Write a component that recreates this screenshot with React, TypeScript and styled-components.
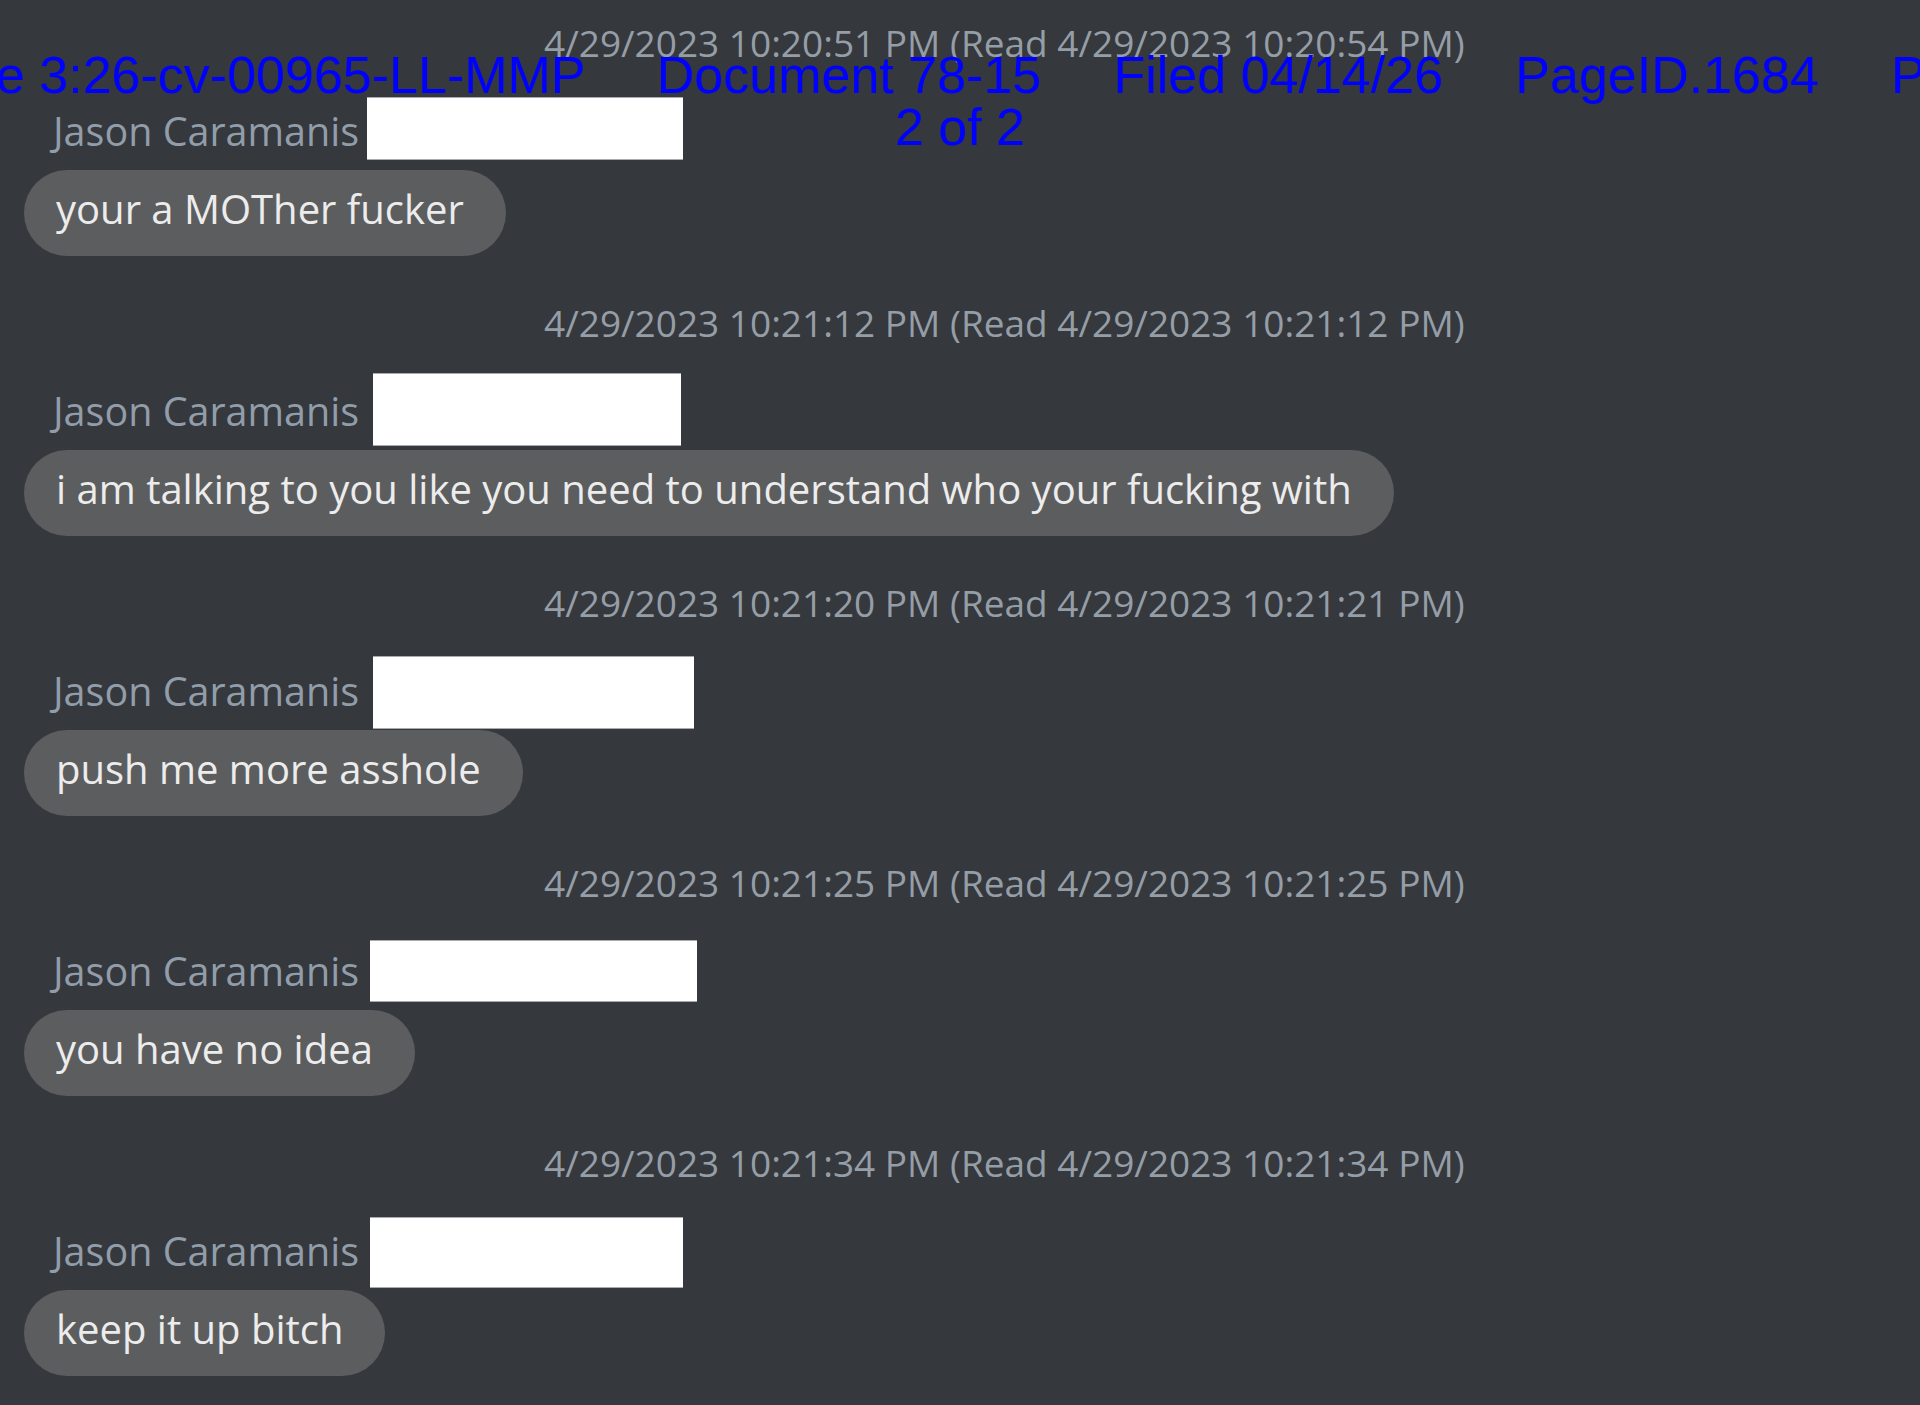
import styled, { createGlobalStyle } from "styled-components";

const GlobalStyle = createGlobalStyle`
  html, body {
    margin: 0;
    padding: 0;
    background: #35383d;
    overflow-x: hidden;
  }
`;

const Page = styled.div`
  position: relative;
  width: 1920px;
  min-height: 1405px;
  overflow: hidden;
  background: #35383d;
  font-family: "Open Sans", "Noto Sans", sans-serif;
`;

const Feed = styled.div`
  display: flex;
  flex-direction: column;
`;

const Block = styled.div`
  display: flex;
  flex-direction: column;
  align-items: flex-start;
  padding-top: 23px;
  height: 280px;
  box-sizing: border-box;
`;

const Stamp = styled.div`
  height: 40px;
  line-height: 40px;
  margin-left: 544px;
  font-size: 37px;
  color: #959ea6;
  white-space: nowrap;
`;

const Header = styled.div`
  display: flex;
  align-items: flex-start;
  height: 107px;
  padding-left: 53px;
`;

const Name = styled.span`
  align-self: flex-end;
  font-size: 39.5px;
  line-height: 46px;
  margin-bottom: 16px;
  color: #929daa;
  white-space: nowrap;
`;

const Redaction = styled.div<{ $w: number; $h: number; $top: number; $shift: number }>`
  width: ${(p) => p.$w}px;
  height: ${(p) => p.$h}px;
  margin-top: ${(p) => p.$top}px;
  margin-left: ${(p) => p.$shift}px;
  background: #ffffff;
  border-top: 1px solid #a8aaad;
  border-bottom: 1px solid #a8aaad;
  box-sizing: border-box;
`;

const Bubble = styled.div`
  margin-left: 24px;
  height: 86px;
  box-sizing: border-box;
  line-height: 78px;
  padding: 0 42px 8px 32px;
  border-radius: 43px;
  background: #5c5d5f;
  color: #ececec;
  font-size: 40px;
  white-space: nowrap;
`;

const Stampline = styled.div`
  position: absolute;
  top: 49px;
  left: 0;
  right: 0;
  display: flex;
  flex-direction: column;
  pointer-events: none;
`;

const StampRow = styled.div<{ $nudge?: number }>`
  display: flex;
  justify-content: center;
  padding-right: ${(p) => p.$nudge ?? 0}px;
  font-family: "Liberation Sans", Arial, sans-serif;
  font-size: 52px;
  line-height: 52px;
  color: #0000ff;
  white-space: pre;
`;

const messages = [
  { ts: "4/29/2023 10:20:51 PM (Read 4/29/2023 10:20:54 PM)", box: { w: 316, h: 63, top: 34, shift: 8 }, text: "your a MOTher fucker" },
  { ts: "4/29/2023 10:21:12 PM (Read 4/29/2023 10:21:12 PM)", box: { w: 308, h: 73, top: 30, shift: 14 }, text: "i am talking to you like you need to understand who your fucking with" },
  { ts: "4/29/2023 10:21:20 PM (Read 4/29/2023 10:21:21 PM)", box: { w: 321, h: 73, top: 33, shift: 14 }, text: "push me more asshole" },
  { ts: "4/29/2023 10:21:25 PM (Read 4/29/2023 10:21:25 PM)", box: { w: 327, h: 62, top: 37, shift: 11 }, text: "you have no idea" },
  { ts: "4/29/2023 10:21:34 PM (Read 4/29/2023 10:21:34 PM)", box: { w: 313, h: 71, top: 34, shift: 11 }, text: "keep it up bitch" },
];

function App() {
  return (
    <Page>
      <GlobalStyle />
      <Feed>
        {messages.map((m) => (
          <Block key={m.ts}>
            <Stamp>{m.ts}</Stamp>
            <Header>
              <Name>Jason Caramanis</Name>
              <Redaction $w={m.box.w} $h={m.box.h} $top={m.box.top} $shift={m.box.shift} />
            </Header>
            <Bubble>{m.text}</Bubble>
          </Block>
        ))}
      </Feed>
      <Stampline>
        <StampRow $nudge={4}>{"Case 3:26-cv-00965-LL-MMP     Document 78-15     Filed 04/14/26     PageID.1684     Page"}</StampRow>
        <StampRow>{"2 of 2"}</StampRow>
      </Stampline>
    </Page>
  );
}

export default App;
